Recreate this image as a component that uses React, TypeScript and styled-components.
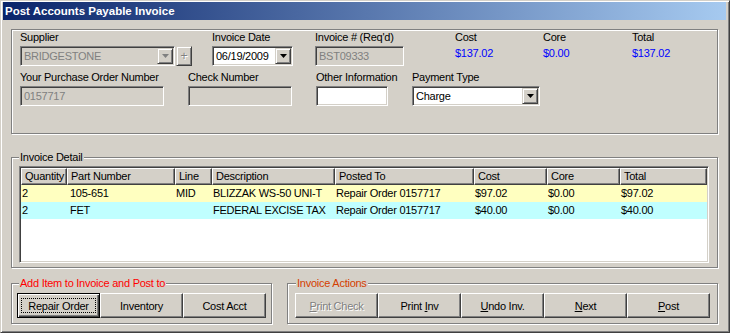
import React from "react";
import styled, { createGlobalStyle } from "styled-components";

const GlobalStyle = createGlobalStyle`
  html, body {
    margin: 0;
    padding: 0;
    background: #d4d0c8;
  }
  body {
    font-family: "Liberation Sans", Arial, sans-serif;
    font-size: 11px;
    color: #000;
  }
`;

type Line = {
  qty: string;
  part: string;
  line: string;
  desc: string;
  posted: string;
  cost: string;
  core: string;
  total: string;
  color: string;
};

const lines: Line[] = [
  {
    qty: "2",
    part: "105-651",
    line: "MID",
    desc: "BLIZZAK WS-50 UNI-T",
    posted: "Repair Order 0157717",
    cost: "$97.02",
    core: "$0.00",
    total: "$97.02",
    color: "#ffffc0",
  },
  {
    qty: "2",
    part: "FET",
    line: "",
    desc: "FEDERAL EXCISE TAX",
    posted: "Repair Order 0157717",
    cost: "$40.00",
    core: "$0.00",
    total: "$40.00",
    color: "#c0ffff",
  },
];

const headers = ["Quantity", "Part Number", "Line", "Description", "Posted To", "Cost", "Core", "Total"];

const Arrow = ({ disabled }: { disabled?: boolean }) => (
  <svg width="7" height="4" viewBox="0 0 7 4">
    <polygon points="0,0 7,0 3.5,4" fill={disabled ? "#808080" : "#000"} />
  </svg>
);

const Combo = ({ value, width, disabled }: { value: string; width: number; disabled?: boolean }) => (
  <Sunken $w={width} $disabled={disabled}>
    <FieldText>{value}</FieldText>
    <DropButton>
      <Arrow disabled={disabled} />
    </DropButton>
  </Sunken>
);

const App = () => {
  return (
    <>
      <GlobalStyle />
      <Window>
        <TitleBar>Post Accounts Payable Invoice</TitleBar>
        <Body>
          <Panel>
            <Row>
              <Field $w={192}>
                <Label>Supplier</Label>
                <Inline>
                  <Combo value="BRIDGESTONE" width={155} disabled />
                  <PlusButton>+</PlusButton>
                </Inline>
              </Field>
              <Field $w={103}>
                <Label>Invoice Date</Label>
                <Combo value="06/19/2009" width={81} />
              </Field>
              <Field $w={140}>
                <Label>Invoice # (Req'd)</Label>
                <Sunken $w={89} $disabled>
                  <FieldText>BST09333</FieldText>
                </Sunken>
              </Field>
              <Field $w={88}>
                <Label>Cost</Label>
                <Amount>$137.02</Amount>
              </Field>
              <Field $w={89}>
                <Label>Core</Label>
                <Amount>$0.00</Amount>
              </Field>
              <Field $w={80}>
                <Label>Total</Label>
                <Amount>$137.02</Amount>
              </Field>
            </Row>
            <Row $gap={4}>
              <Field $w={168}>
                <Label>Your Purchase Order Number</Label>
                <Sunken $w={144} $disabled>
                  <FieldText>0157717</FieldText>
                </Sunken>
              </Field>
              <Field $w={128}>
                <Label>Check Number</Label>
                <Sunken $w={104} $disabled />
              </Field>
              <Field $w={96}>
                <Label>Other Information</Label>
                <Sunken $w={72} />
              </Field>
              <Field $w={140}>
                <Label>Payment Type</Label>
                <Combo value="Charge" width={128} />
              </Field>
            </Row>
          </Panel>

          <DetailGroup>
            <Legend $offset={0}>Invoice Detail</Legend>
            <Grid>
              <GridRow>
                {headers.map((h) => (
                  <HeadCell key={h}>{h}</HeadCell>
                ))}
              </GridRow>
              {lines.map((l, i) => (
                <GridRow key={i} $bg={l.color}>
                  <Cell>{l.qty}</Cell>
                  <Cell $pad={3}>{l.part}</Cell>
                  <Cell>{l.line}</Cell>
                  <Cell>{l.desc}</Cell>
                  <Cell>{l.posted}</Cell>
                  <Cell>{l.cost}</Cell>
                  <Cell>{l.core}</Cell>
                  <Cell>{l.total}</Cell>
                </GridRow>
              ))}
            </Grid>
          </DetailGroup>

          <BottomRow>
            <ButtonGroup $w={261} $padL={5} $padR={4}>
              <Legend $offset={2} $color="#ff0000">
                Add Item to Invoice and Post to
              </Legend>
              <Buttons>
                <Btn $default>
                  <Focus>Repair Order</Focus>
                </Btn>
                <Btn>
                  <span>Inventory</span>
                </Btn>
                <Btn>
                  <span>Cost Acct</span>
                </Btn>
              </Buttons>
            </ButtonGroup>
            <ButtonGroup $w={431} $padL={7} $padR={7}>
              <Legend $offset={1} $color="#d44000">
                Invoice Actions
              </Legend>
              <Buttons>
                <Btn disabled>
                  <span>
                    <u>P</u>rint Check
                  </span>
                </Btn>
                <Btn>
                  <span>
                    Print <u>I</u>nv
                  </span>
                </Btn>
                <Btn>
                  <span>
                    <u>U</u>ndo Inv.
                  </span>
                </Btn>
                <Btn>
                  <span>
                    <u>N</u>ext
                  </span>
                </Btn>
                <Btn>
                  <span>
                    <u>P</u>ost
                  </span>
                </Btn>
              </Buttons>
            </ButtonGroup>
          </BottomRow>
        </Body>
      </Window>
    </>
  );
};

const Window = styled.div`
  width: 730px;
  height: 333px;
  box-sizing: border-box;
  background: #d4d0c8;
  border: 1px solid;
  border-color: #d4d0c8 #404040 #404040 #d4d0c8;
  box-shadow: inset 1px 1px 0 #fff, inset -1px -1px 0 #808080;
  padding: 1px 3px 0 2px;
  display: flex;
  flex-direction: column;
  overflow: hidden;
  letter-spacing: -0.25px;
`;

const TitleBar = styled.div`
  flex: none;
  height: 18px;
  padding-left: 2px;
  display: flex;
  align-items: center;
  background: linear-gradient(to right, #0a246a, #a6caf0);
  color: #fff;
  font-weight: bold;
  font-size: 11.5px;
  letter-spacing: 0;
`;

const Body = styled.div`
  flex: 1;
  padding: 9px 8px 0 8px;
  display: flex;
  flex-direction: column;
`;

const Panel = styled.div`
  height: 105px;
  box-sizing: border-box;
  border: 1px solid #808080;
  box-shadow: 1px 1px 0 #fff, inset 1px 1px 0 #fff;
  padding: 0 8px;
`;

const Row = styled.div<{ $gap?: number }>`
  display: flex;
  margin-top: ${(p) => p.$gap ?? 0}px;
`;

const Field = styled.div<{ $w: number }>`
  width: ${(p) => p.$w}px;
  flex: none;
  display: flex;
  flex-direction: column;
`;

const Label = styled.div`
  height: 14px;
  line-height: 14px;
  margin-bottom: 2px;
  white-space: nowrap;
`;

const Inline = styled.div`
  display: flex;
  gap: 1px;
`;

const Amount = styled.div`
  line-height: 14px;
  color: #0000ff;
`;

const Sunken = styled.div<{ $w: number; $disabled?: boolean }>`
  width: ${(p) => p.$w}px;
  height: 20px;
  box-sizing: border-box;
  border: 1px solid;
  border-color: #808080 #fff #fff #808080;
  box-shadow: inset 1px 1px 0 #404040, inset -1px -1px 0 #d4d0c8;
  background: ${(p) => (p.$disabled ? "#d4d0c8" : "#fff")};
  color: ${(p) => (p.$disabled ? "#808080" : "#000")};
  padding: 1px;
  display: flex;
  align-items: center;
`;

const FieldText = styled.div`
  flex: 1;
  padding-left: 2px;
  line-height: 16px;
  white-space: nowrap;
  overflow: hidden;
`;

const Raised = styled.div`
  box-sizing: border-box;
  background: #d4d0c8;
  border: 1px solid;
  border-color: #d4d0c8 #404040 #404040 #d4d0c8;
  box-shadow: inset 1px 1px 0 #fff, inset -1px -1px 0 #808080;
  display: flex;
  align-items: center;
  justify-content: center;
`;

const DropButton = styled(Raised)`
  width: 16px;
  height: 16px;
  flex: none;
`;

const PlusButton = styled(Raised)`
  width: 16px;
  height: 20px;
  color: #808080;
  text-shadow: 1px 1px 0 #fff;
  font-size: 12px;
`;

const Legend = styled.legend<{ $offset: number; $color?: string }>`
  padding: 0 1px;
  margin-left: ${(p) => p.$offset}px;
  line-height: 13px;
  color: ${(p) => p.$color ?? "#000"};
  background: #d4d0c8;
  white-space: nowrap;
`;

const GroupBase = styled.fieldset`
  margin: 0;
  min-width: 0;
  box-sizing: border-box;
  border: 1px solid #808080;
  box-shadow: 1px 1px 0 #fff, inset 1px 1px 0 #fff;
`;

const DetailGroup = styled(GroupBase)`
  margin-top: 17px;
  padding: 2px 8px 4px 7px;
`;

const Grid = styled.div`
  height: 97px;
  box-sizing: border-box;
  border: 1px solid;
  border-color: #808080 #fff #fff #808080;
  box-shadow: inset 1px 1px 0 #404040, inset -1px -1px 0 #d4d0c8;
  background: #fff;
  padding: 1px;
`;

const GridRow = styled.div<{ $bg?: string }>`
  display: grid;
  grid-template-columns: 46px 108px 37px 123px 139px 73px 73px 1fr;
  height: 17px;
  background: ${(p) => p.$bg ?? "transparent"};
`;

const HeadCell = styled.div`
  box-sizing: border-box;
  background: #d4d0c8;
  border: 1px solid;
  border-color: #fff #404040 #404040 #fff;
  box-shadow: inset -1px -1px 0 #808080;
  padding-left: 3px;
  line-height: 15px;
  white-space: nowrap;
  overflow: hidden;
`;

const Cell = styled.div<{ $pad?: number }>`
  padding-left: ${(p) => p.$pad ?? 1}px;
  line-height: 17px;
  white-space: nowrap;
  overflow: hidden;
`;

const BottomRow = styled.div`
  display: flex;
  gap: 15px;
  margin-top: 9px;
`;

const ButtonGroup = styled(GroupBase)<{ $w: number; $padL: number; $padR: number }>`
  width: ${(p) => p.$w}px;
  padding: 3px ${(p) => p.$padR}px 5px ${(p) => p.$padL}px;
`;

const Buttons = styled.div`
  display: flex;
`;

const Btn = styled.button<{ $default?: boolean }>`
  width: 83px;
  height: 25px;
  flex: none;
  box-sizing: border-box;
  margin: 0;
  padding: 0;
  font: inherit;
  letter-spacing: inherit;
  color: #000;
  background: #d4d0c8;
  border: 1px solid;
  border-color: ${(p) => (p.$default ? "#000" : "#fff #404040 #404040 #fff")};
  box-shadow: ${(p) =>
    p.$default
      ? "inset 1px 1px 0 #fff, inset -1px -1px 0 #404040, inset -2px -2px 0 #808080"
      : "inset -1px -1px 0 #808080"};
  display: flex;
  align-items: center;
  justify-content: center;
  white-space: pre;

  &:disabled {
    color: #808080;
    text-shadow: 1px 1px 0 #fff;
  }
`;

const Focus = styled.span`
  display: flex;
  align-items: center;
  justify-content: center;
  width: 75px;
  height: 15px;
  border: 1px dotted #000;
  box-sizing: border-box;
`;

export default App;
